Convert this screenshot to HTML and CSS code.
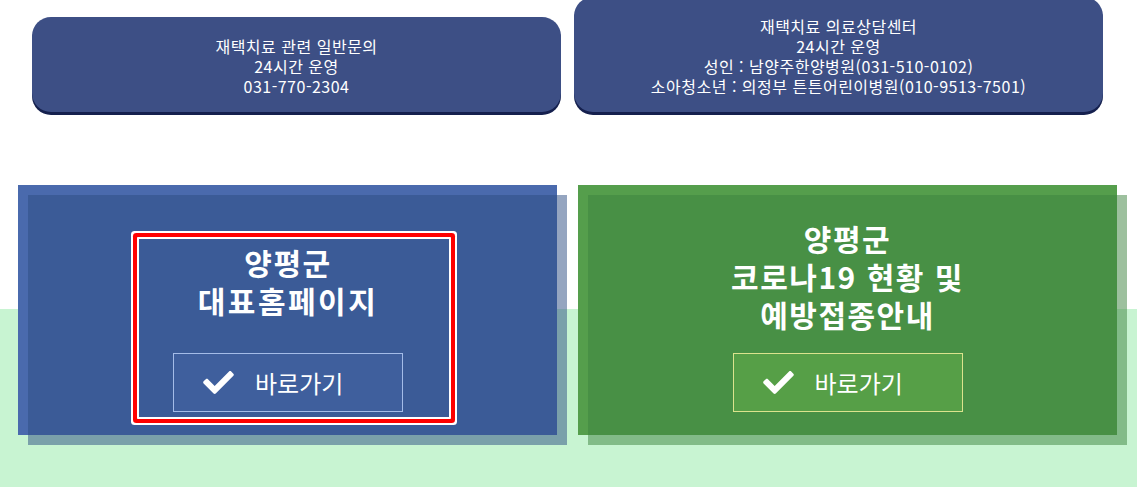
FILE: index.html
```html
<!DOCTYPE html>
<html lang="ko">
<head>
  <meta charset="UTF-8">
  <meta name="viewport" content="width=device-width, initial-scale=1.0">
  <title>양평군 재택치료 안내</title>
  <link rel="stylesheet" href="styles.css">
</head>
<body>
  <div class="contact-row">
    <div class="contact-box">
      재택치료 관련 일반문의<br>
      24시간 운영<br>
      031-770-2304
    </div>
    <div class="contact-box">
      재택치료 의료상담센터<br>
      24시간 운영<br>
      성인 : 남양주한양병원(031-510-0102)<br>
      소아청소년 : 의정부 튼튼어린이병원(010-9513-7501)
    </div>
  </div>

  <div class="link-area">
    <div class="card card-blue">
      <a href="#" class="card-link focused">
        <div class="card-title">양평군<br><span class="wide">대표홈페이지</span></div>
        <span class="go-btn">
          <svg class="check" viewBox="0 64 512 384"><path d="M173.9 439.4l-166.4-166.4c-10-10-10-26.2 0-36.2l36.2-36.2c10-10 26.2-10 36.2 0L192 312.7 432.1 72.6c10-10 26.2-10 36.2 0l36.2 36.2c10 10 10 26.2 0 36.2l-294.4 294.4c-10 10-26.2 10-36.2 0z"/></svg>
          바로가기
        </span>
      </a>
    </div>
    <div class="card card-green">
      <a href="#" class="card-link">
        <div class="card-title">양평군<br>코로나19 현황 및<br>예방접종안내</div>
        <span class="go-btn">
          <svg class="check" viewBox="0 64 512 384"><path d="M173.9 439.4l-166.4-166.4c-10-10-10-26.2 0-36.2l36.2-36.2c10-10 26.2-10 36.2 0L192 312.7 432.1 72.6c10-10 26.2-10 36.2 0l36.2 36.2c10 10 10 26.2 0 36.2l-294.4 294.4c-10 10-26.2 10-36.2 0z"/></svg>
          바로가기
        </span>
      </a>
    </div>
  </div>
</body>
</html>
```

FILE: styles.css
```css
body {
  margin: 0;
  font-family: "Noto Sans CJK KR", "Noto Sans", sans-serif;
  background: #fff;
  overflow: hidden;
}
.contact-row {
  display: flex;
  align-items: flex-end;
  gap: 13px;
  padding-left: 32px;
  margin-top: -3px;
}
.contact-box {
  width: 529px;
  box-sizing: border-box;
  padding: 19px 10px 16px;
  background: #3d4f85;
  border-radius: 19px;
  box-shadow: 0 3px 0 #15204e;
  color: #fff;
  font-size: 16px;
  line-height: 20px;
  letter-spacing: 0.5px;
  text-align: center;
}
.link-area {
  display: flex;
  gap: 21px;
  margin-top: 73px;
  padding: 0 0 52px 18px;
  background: linear-gradient(to bottom, #fff 124px, #c8f4d2 124px);
}
.card {
  position: relative;
  isolation: isolate;
  width: 539px;
  height: 250px;
  box-sizing: border-box;
  display: flex;
  flex-direction: column;
  align-items: center;
}
.card::before {
  content: "";
  position: absolute;
  left: 10px;
  top: 10px;
  width: 100%;
  height: 100%;
  z-index: -1;
}
.card-blue {
  background: #4a6aad;
  padding-top: 52px;
}
.card-blue::before {
  background: rgba(44, 75, 130, 0.5);
}
.card-green {
  background: #559e4c;
  padding-top: 34px;
}
.card-green::before {
  background: rgba(59, 130, 62, 0.5);
}
.card-link {
  display: flex;
  flex-direction: column;
  align-items: center;
  color: #fff;
  text-decoration: none;
}
.card-link.focused {
  width: 314px;
  box-sizing: border-box;
  margin-left: 13px;
  padding: 4px 12px 5px 0;
  border: 2px solid #fff;
  border-radius: 1px;
  box-shadow: 0 0 0 4px #f00, 0 0 0 6px #fff;
}
.card-title {
  font-size: 30px;
  font-weight: bold;
  line-height: 38px;
  letter-spacing: 1.5px;
  text-align: center;
}
.card-title .wide {
  letter-spacing: 2.5px;
}
.go-btn {
  display: flex;
  align-items: center;
  width: 230px;
  height: 59px;
  box-sizing: border-box;
  padding-left: 29px;
  font-size: 24px;
  color: #fff;
}
.card-blue .go-btn {
  margin-top: 34px;
  background: #3f5f9d;
  border: 1px solid #a4bce8;
}
.card-green .go-btn {
  margin-top: 20px;
  background: #569f47;
  border: 1px solid #dbe38d;
}
.check {
  width: 31px;
  height: 23px;
  margin-right: 21px;
  fill: #fff;
}
```
